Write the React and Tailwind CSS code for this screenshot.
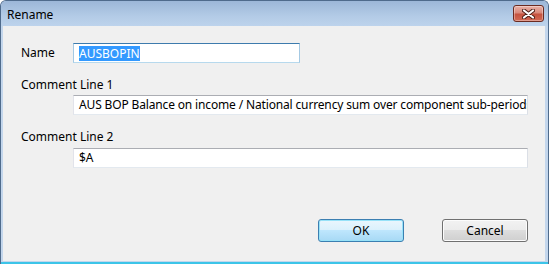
import React from "react";

function CloseButton() {
  return (
    <div className="w-[31px] h-[17px] rounded-[3px] border border-[#6b2a20] bg-[linear-gradient(to_bottom,#e9b1a7_0%,#d9897b_45%,#c5533f_55%,#d26a55_100%)] shadow-[inset_0_0_0_1px_rgba(255,255,255,0.35)] flex items-center justify-center">
      <svg width="13" height="10" viewBox="0 0 13 10">
        <path d="M2 1.5 L11 8.5 M11 1.5 L2 8.5" stroke="#4a1c14" strokeWidth="4" strokeLinecap="round" />
        <path d="M2 1.5 L11 8.5 M11 1.5 L2 8.5" stroke="#ffffff" strokeWidth="2.2" strokeLinecap="round" />
      </svg>
    </div>
  );
}

const inputBase =
  "h-[20px] bg-white border border-t-[#abadb3] border-l-[#e2e3ea] border-r-[#dbdfe6] border-b-[#e3e9ef] pl-[5px] flex items-center overflow-hidden whitespace-nowrap text-black";

export default function App() {
  return (
    <div
      className="w-[549px] h-[264px] relative overflow-hidden text-[12px] leading-[16px] text-black"
      style={{ fontFamily: '"Segoe UI", "Noto Sans", "Open Sans", sans-serif' }}
    >
      <div className="w-full h-full flex flex-col rounded-t-[6px] border border-b-0 border-[#4f6b8c] bg-[#c3d6ec]">
        {/* Title bar */}
        <div className="h-[25px] shrink-0 flex items-start justify-between bg-[linear-gradient(to_bottom,#9cb7d8_0%,#b3cbe6_60%,#bdd3ec_100%)] rounded-t-[5px]">
          <div className="pl-[6px] pt-[6px] leading-[16px]">Rename</div>
          <div className="pt-[4px] pr-[4px]">
            <CloseButton />
          </div>
        </div>
        {/* Client area */}
        <div className="flex-1 ml-[2px] mr-[3px] mb-[1px] bg-[#f0f0f0] pl-[18px] pr-[17px] pt-[17px] flex flex-col">
          <div className="flex items-center h-[20px]">
            <div className="w-[52px]">Name</div>
            <div className="w-[227px] h-[20px] bg-white border border-t-[#3d7bad] border-l-[#a4c9e3] border-r-[#a4c9e3] border-b-[#b7d9ed] pl-[5px] flex items-center">
              <span className="bg-[#3399ff] text-white leading-[15px] h-[15px]">AUSBOPIN</span>
            </div>
          </div>
          <div className="mt-[14px] h-[16px]">Comment Line 1</div>
          <div className={"mt-[2px] ml-[52px] tracking-[-0.15px] " + inputBase}>
            AUS BOP Balance on income / National currency sum over component sub-periods
          </div>
          <div className="mt-[14px] h-[16px]">Comment Line 2</div>
          <div className={"mt-[3px] ml-[52px] " + inputBase}>$A</div>
          <div className="mt-[51px] flex justify-end gap-[38px]">
            <button className="w-[86px] h-[23px] rounded-[3px] border border-[#3c7fb1] shadow-[inset_0_0_0_1px_#97e2f8] bg-[linear-gradient(to_bottom,#eaf6fd_0%,#d9f0fc_50%,#bee6fd_50%,#a7d9f5_100%)] text-black">
              OK
            </button>
            <button className="w-[86px] h-[23px] rounded-[3px] border border-[#707070] shadow-[inset_0_0_0_1px_#fcfcfc] bg-[linear-gradient(to_bottom,#f2f2f2_0%,#ebebeb_50%,#dddddd_50%,#cfcfcf_100%)] text-black">
              Cancel
            </button>
          </div>
        </div>
        <div className="h-[2px] shrink-0 bg-[#3cc4e8]"></div>
      </div>
    </div>
  );
}
